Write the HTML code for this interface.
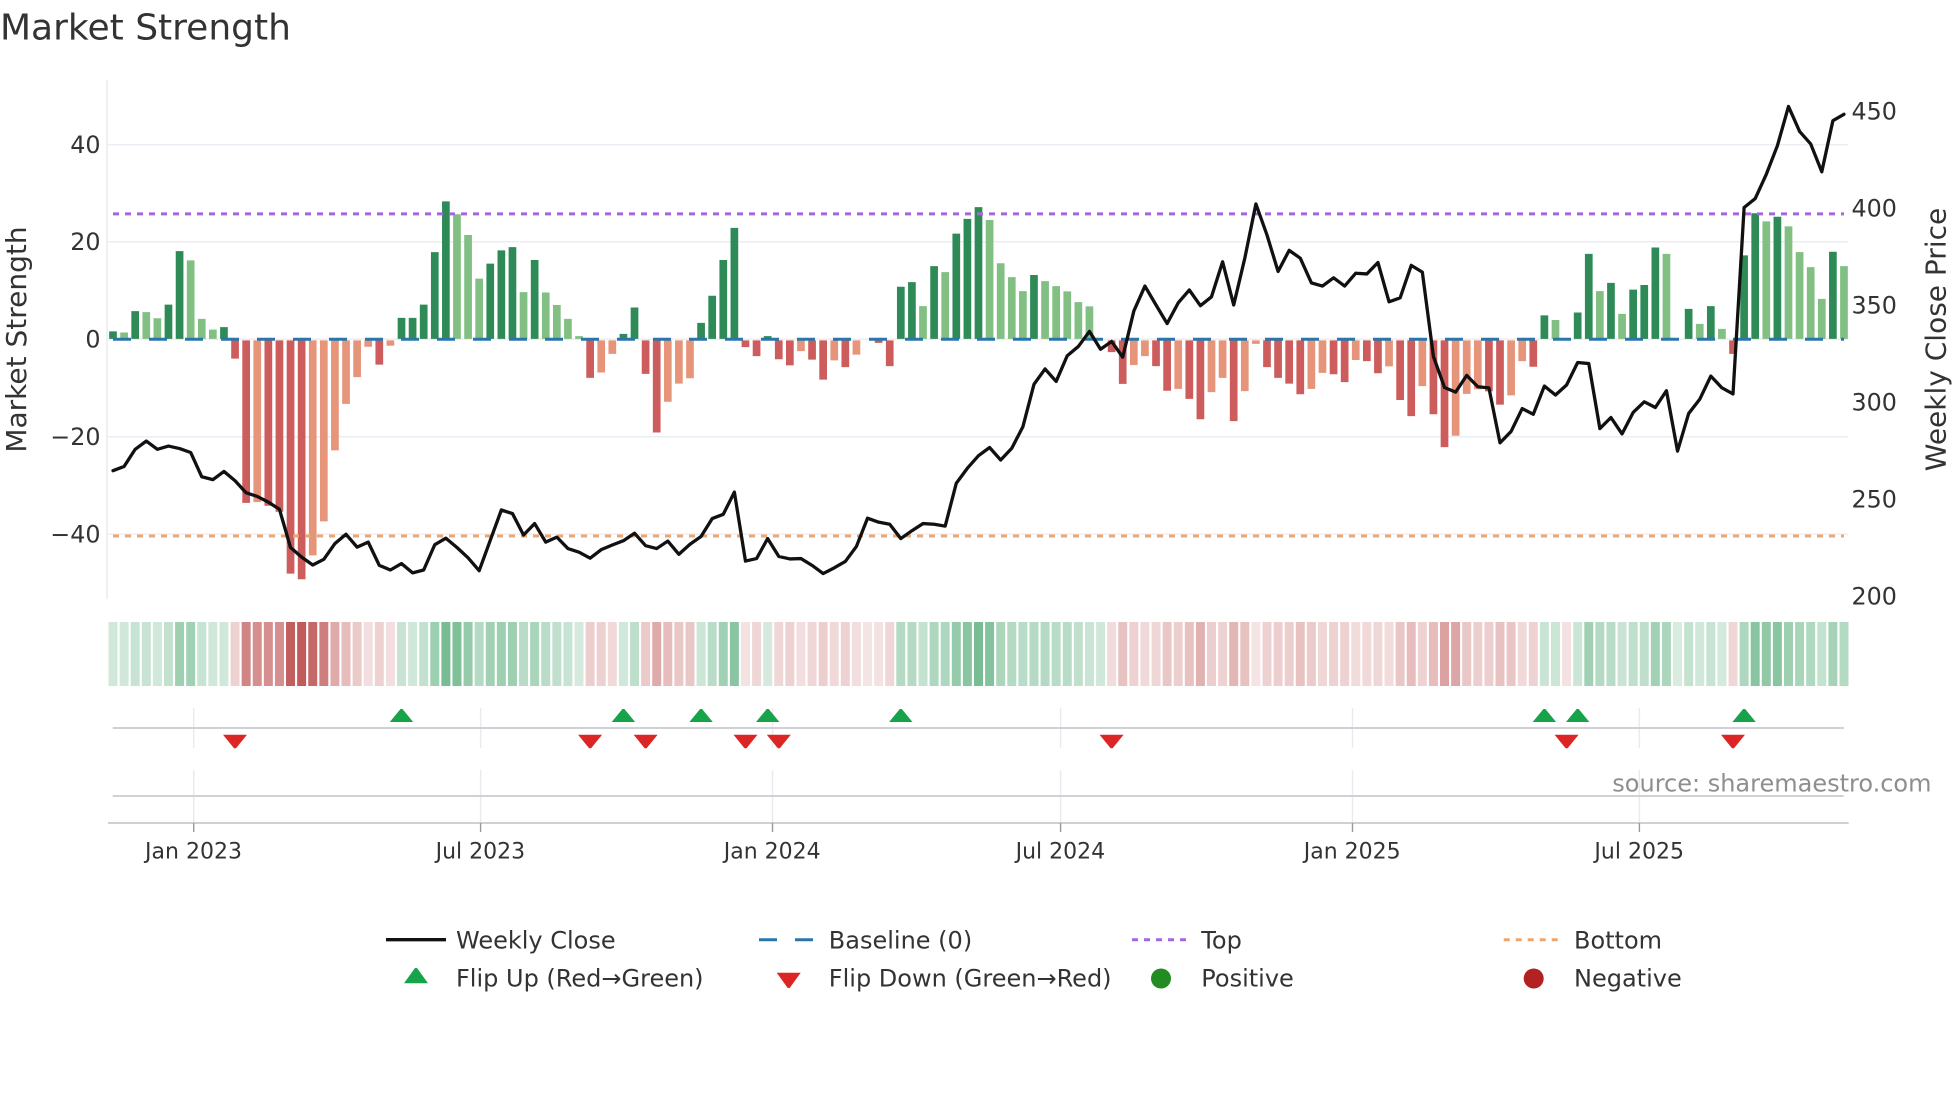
<!DOCTYPE html>
<html lang="en">
<head>
<meta charset="utf-8">
<title>Market Strength</title>
<style>
html,body{margin:0;padding:0;background:#fff;width:1960px;height:1102px;overflow:hidden}
svg{display:block}
text{font-family:"DejaVu Sans","Liberation Sans",sans-serif;fill:#333}
.t{font-size:22px}
.y{font-size:23.8px}
.l{font-size:24px}
.a{font-size:28px}
</style>
</head>
<body>
<svg xmlns="http://www.w3.org/2000/svg" width="1960" height="1102" viewBox="0 0 1960 1102">
<rect width="1960" height="1102" fill="#fff"/>
<text x="0" y="39.5" style="font-size:36px">Market Strength</text>

<!-- grid -->
<path d="M107 80V599" stroke="#e8eaf0" stroke-width="1.4" fill="none"/>
<path d="M107 144.6H1848M107 241.8H1848M107 339.3H1848M107 436.8H1848M107 534.3H1848" stroke="#ebedf5" stroke-width="1.5" fill="none"/>

<!-- bars -->
<g transform="translate(113,60) scale(11.096,.35714)" fill="none" stroke-width=".694">
<path stroke="#2e8b57" d="M0 781V760M2 781V703M5 781V685M6 781V535M10 781V748M26 781V722M27 781V722M28 781V685M29 781V538M30 781V396M34 781V570M35 781V533M36 781V524M38 781V560M46 781V767M47 781V693M53 781V736M54 781V660M55 781V560M56 781V470M59 781V773M71 781V635M72 781V622M74 781V577M76 781V486M77 781V445M78 781V412M83 781V602M129 781V715M132 781V707M133 781V543M135 781V624M137 781V643M138 781V630M139 781V525M142 781V697M144 781V689M147 781V547M148 781V429M150 781V439M155 781V537"/>
<path stroke="#81bf82" d="M1 781V763M3 781V706M4 781V723M7 781V561M8 781V725M9 781V755M31 781V432M32 781V490M33 781V612M37 781V650M39 781V651M40 781V686M41 781V725M42 781V773M73 781V689M75 781V594M79 781V448M80 781V569M81 781V608M82 781V647M84 781V619M85 781V633M86 781V648M87 781V678M88 781V690M130 781V728M134 781V647M136 781V711M140 781V543M143 781V739M145 781V753M149 781V452M151 781V466M152 781V538M153 781V580M154 781V669M156 781V577"/>
<path stroke="#cd5c5c" d="M11 785V836M12 785V1240M14 785V1248M15 785V1265M16 785V1438M17 785V1454M24 785V853M43 785V890M48 785V879M49 785V1043M57 785V804M58 785V829M60 785V838M61 785V855M63 785V839M64 785V895M66 785V860M69 785V792M70 785V857M90 785V818M91 785V907M94 785V857M95 785V926M97 785V949M98 785V1006M101 785V1011M104 785V860M105 785V890M106 785V906M107 785V936M110 785V880M111 785V902M113 785V843M114 785V877M116 785V952M117 785V997M119 785V992M120 785V1084M124 785V928M125 785V965M128 785V859M146 785V823"/>
<path stroke="#e6957a" d="M13 785V1238M18 785V1387M19 785V1292M20 785V1093M21 785V963M22 785V888M23 785V803M25 785V800M44 785V875M45 785V823M50 785V957M51 785V906M52 785V891M62 785V815M65 785V841M67 785V825M92 785V854M93 785V829M96 785V921M99 785V930M100 785V890M102 785V927M103 785V795M108 785V921M109 785V876M112 785V840M115 785V858M118 785V913M121 785V1052M122 785V935M123 785V922M126 785V939M127 785V843"/>
</g>

<!-- reference lines -->
<path d="M113 339.3H1844" stroke="#2a76ab" stroke-width="3" stroke-dasharray="18 18" fill="none"/>
<path d="M113 213.9H1844" stroke="#a468dc" stroke-width="3" stroke-dasharray="6 6" fill="none"/>
<path d="M113 536H1844" stroke="#eda56c" stroke-width="3" stroke-dasharray="6 6" fill="none"/>

<!-- price line -->
<g transform="translate(113,60) scale(11.096,.35714)">
<polyline fill="none" stroke="#111" stroke-width="3.3" stroke-linejoin="round" stroke-linecap="round" vector-effect="non-scaling-stroke" points="0,1150 1,1138 2,1090 3,1067 4,1090 5,1081 6,1088 7,1099 8,1167 9,1175 10,1152 11,1178 12,1212 13,1222 14,1238 15,1258 16,1365 17,1392 18,1414 19,1398 20,1354 21,1328 22,1364 23,1350 24,1415 25,1428 26,1410 27,1436 28,1428 29,1357 30,1339 31,1365 32,1394 33,1430 34,1345 35,1260 36,1270 37,1330 38,1298 39,1350 40,1336 41,1368 42,1378 43,1395 44,1371 45,1358 46,1346 47,1325 48,1360 49,1368 50,1347 51,1384 52,1356 53,1334 54,1284 55,1272 56,1210 57,1403 58,1396 59,1340 60,1390 61,1397 62,1396 63,1415 64,1438 65,1422 66,1404 67,1362 68,1283 69,1294 70,1300 71,1340 72,1318 73,1298 74,1300 75,1305 76,1185 77,1143 78,1108 79,1085 80,1120 81,1087 82,1027 83,908 84,865 85,900 86,828 87,802 88,760 89,810 90,788 91,832 92,703 93,633 94,686 95,738 96,680 97,644 98,688 99,663 100,565 101,686 102,555 103,403 104,490 105,592 106,533 107,555 108,624 109,633 110,610 111,633 112,597 113,599 114,567 115,677 116,666 117,575 118,594 119,830 120,917 121,930 122,883 123,915 124,918 125,1072 126,1040 127,976 128,992 129,913 130,938 131,910 132,847 133,850 134,1032 135,1001 136,1047 137,987 138,957 139,973 140,926 141,1095 142,990 143,950 144,885 145,918 146,935 147,413 148,388 149,320 150,240 151,130 152,200 153,235 154,313 155,170 156,152"/>
</g>

<!-- left ticks -->
<text class="y" x="100.5" y="153" text-anchor="end">40</text>
<text class="y" x="100.5" y="250.2" text-anchor="end">20</text>
<text class="y" x="100.5" y="347.7" text-anchor="end">0</text>
<text class="y" x="100.5" y="445.2" text-anchor="end">−20</text>
<text class="y" x="100.5" y="542.7" text-anchor="end">−40</text>
<!-- right ticks -->
<text class="y" x="1851.5" y="119.5">450</text>
<text class="y" x="1851.5" y="216.6">400</text>
<text class="y" x="1851.5" y="313.4">350</text>
<text class="y" x="1851.5" y="410.6">300</text>
<text class="y" x="1851.5" y="507.7">250</text>
<text class="y" x="1851.5" y="604.5">200</text>
<!-- axis titles -->
<text class="a" text-anchor="middle" transform="translate(26,339.5) rotate(-90)">Market Strength</text>
<text class="a" text-anchor="middle" transform="translate(1945.5,339.5) rotate(-90)">Weekly Close Price</text>

<!-- heat strip -->
<g transform="translate(113,622) scale(11.096,64)" fill="none" stroke-width=".811">
<g stroke="#158c45">
<path stroke-opacity=".2" d="M0 0V1"/><path stroke-opacity=".2" d="M1 0V1"/><path stroke-opacity=".24" d="M2 0V1"/><path stroke-opacity=".24" d="M3 0V1"/><path stroke-opacity=".2" d="M4 0V1"/><path stroke-opacity=".26" d="M5 0V1"/><path stroke-opacity=".42" d="M6 0V1"/><path stroke-opacity=".4" d="M7 0V1"/><path stroke-opacity=".24" d="M8 0V1"/><path stroke-opacity=".2" d="M9 0V1"/><path stroke-opacity=".2" d="M10 0V1"/>
<path stroke-opacity=".24" d="M26 0V1"/><path stroke-opacity=".2" d="M27 0V1"/><path stroke-opacity=".26" d="M28 0V1"/><path stroke-opacity=".42" d="M29 0V1"/><path stroke-opacity=".58" d="M30 0V1"/><path stroke-opacity=".55" d="M31 0V1"/><path stroke-opacity=".45" d="M32 0V1"/><path stroke-opacity=".32" d="M33 0V1"/><path stroke-opacity=".4" d="M34 0V1"/><path stroke-opacity=".42" d="M35 0V1"/><path stroke-opacity=".42" d="M36 0V1"/><path stroke-opacity=".3" d="M37 0V1"/><path stroke-opacity=".37" d="M38 0V1"/><path stroke-opacity=".3" d="M39 0V1"/><path stroke-opacity=".27" d="M40 0V1"/><path stroke-opacity=".24" d="M41 0V1"/><path stroke-opacity=".18" d="M42 0V1"/>
<path stroke-opacity=".2" d="M46 0V1"/><path stroke-opacity=".28" d="M47 0V1"/>
<path stroke-opacity=".22" d="M53 0V1"/><path stroke-opacity=".3" d="M54 0V1"/><path stroke-opacity=".4" d="M55 0V1"/><path stroke-opacity=".5" d="M56 0V1"/>
<path stroke-opacity=".18" d="M59 0V1"/>
<path stroke-opacity=".32" d="M71 0V1"/><path stroke-opacity=".32" d="M72 0V1"/><path stroke-opacity=".25" d="M73 0V1"/><path stroke-opacity=".35" d="M74 0V1"/><path stroke-opacity=".35" d="M75 0V1"/><path stroke-opacity=".45" d="M76 0V1"/><path stroke-opacity=".5" d="M77 0V1"/><path stroke-opacity=".58" d="M78 0V1"/><path stroke-opacity=".52" d="M79 0V1"/><path stroke-opacity=".36" d="M80 0V1"/><path stroke-opacity=".32" d="M81 0V1"/><path stroke-opacity=".3" d="M82 0V1"/><path stroke-opacity=".32" d="M83 0V1"/><path stroke-opacity=".32" d="M84 0V1"/><path stroke-opacity=".3" d="M85 0V1"/><path stroke-opacity=".3" d="M86 0V1"/><path stroke-opacity=".27" d="M87 0V1"/><path stroke-opacity=".23" d="M88 0V1"/><path stroke-opacity=".2" d="M89 0V1"/>
<path stroke-opacity=".23" d="M129 0V1"/><path stroke-opacity=".22" d="M130 0V1"/>
<path stroke-opacity=".22" d="M132 0V1"/><path stroke-opacity=".4" d="M133 0V1"/><path stroke-opacity=".32" d="M134 0V1"/><path stroke-opacity=".3" d="M135 0V1"/><path stroke-opacity=".23" d="M136 0V1"/><path stroke-opacity=".28" d="M137 0V1"/><path stroke-opacity=".28" d="M138 0V1"/><path stroke-opacity=".4" d="M139 0V1"/><path stroke-opacity=".36" d="M140 0V1"/><path stroke-opacity=".17" d="M141 0V1"/><path stroke-opacity=".25" d="M142 0V1"/><path stroke-opacity=".2" d="M143 0V1"/><path stroke-opacity=".24" d="M144 0V1"/><path stroke-opacity=".19" d="M145 0V1"/>
<path stroke-opacity=".35" d="M147 0V1"/><path stroke-opacity=".5" d="M148 0V1"/><path stroke-opacity=".47" d="M149 0V1"/><path stroke-opacity=".5" d="M150 0V1"/><path stroke-opacity=".42" d="M151 0V1"/><path stroke-opacity=".37" d="M152 0V1"/><path stroke-opacity=".34" d="M153 0V1"/><path stroke-opacity=".25" d="M154 0V1"/><path stroke-opacity=".38" d="M155 0V1"/><path stroke-opacity=".32" d="M156 0V1"/>
</g>
<g stroke="#ab2020">
<path stroke-opacity=".2" d="M11 0V1"/><path stroke-opacity=".55" d="M12 0V1"/><path stroke-opacity=".5" d="M13 0V1"/><path stroke-opacity=".5" d="M14 0V1"/><path stroke-opacity=".5" d="M15 0V1"/><path stroke-opacity=".72" d="M16 0V1"/><path stroke-opacity=".74" d="M17 0V1"/><path stroke-opacity=".68" d="M18 0V1"/><path stroke-opacity=".58" d="M19 0V1"/><path stroke-opacity=".38" d="M20 0V1"/><path stroke-opacity=".3" d="M21 0V1"/><path stroke-opacity=".24" d="M22 0V1"/><path stroke-opacity=".15" d="M23 0V1"/><path stroke-opacity=".2" d="M24 0V1"/><path stroke-opacity=".15" d="M25 0V1"/>
<path stroke-opacity=".22" d="M43 0V1"/><path stroke-opacity=".21" d="M44 0V1"/><path stroke-opacity=".17" d="M45 0V1"/>
<path stroke-opacity=".24" d="M48 0V1"/><path stroke-opacity=".38" d="M49 0V1"/><path stroke-opacity=".3" d="M50 0V1"/><path stroke-opacity=".25" d="M51 0V1"/><path stroke-opacity=".25" d="M52 0V1"/>
<path stroke-opacity=".13" d="M57 0V1"/><path stroke-opacity=".18" d="M58 0V1"/>
<path stroke-opacity=".18" d="M60 0V1"/><path stroke-opacity=".2" d="M61 0V1"/><path stroke-opacity=".15" d="M62 0V1"/><path stroke-opacity=".18" d="M63 0V1"/><path stroke-opacity=".22" d="M64 0V1"/><path stroke-opacity=".17" d="M65 0V1"/><path stroke-opacity=".2" d="M66 0V1"/><path stroke-opacity=".15" d="M67 0V1"/><path stroke-opacity=".12" d="M68 0V1"/><path stroke-opacity=".13" d="M69 0V1"/><path stroke-opacity=".18" d="M70 0V1"/>
<path stroke-opacity=".16" d="M90 0V1"/><path stroke-opacity=".28" d="M91 0V1"/><path stroke-opacity=".2" d="M92 0V1"/><path stroke-opacity=".17" d="M93 0V1"/><path stroke-opacity=".18" d="M94 0V1"/><path stroke-opacity=".25" d="M95 0V1"/><path stroke-opacity=".22" d="M96 0V1"/><path stroke-opacity=".28" d="M97 0V1"/><path stroke-opacity=".35" d="M98 0V1"/><path stroke-opacity=".22" d="M99 0V1"/><path stroke-opacity=".2" d="M100 0V1"/><path stroke-opacity=".33" d="M101 0V1"/><path stroke-opacity=".28" d="M102 0V1"/><path stroke-opacity=".12" d="M103 0V1"/><path stroke-opacity=".2" d="M104 0V1"/><path stroke-opacity=".22" d="M105 0V1"/><path stroke-opacity=".22" d="M106 0V1"/><path stroke-opacity=".28" d="M107 0V1"/><path stroke-opacity=".24" d="M108 0V1"/><path stroke-opacity=".18" d="M109 0V1"/><path stroke-opacity=".2" d="M110 0V1"/><path stroke-opacity=".2" d="M111 0V1"/><path stroke-opacity=".16" d="M112 0V1"/><path stroke-opacity=".17" d="M113 0V1"/><path stroke-opacity=".18" d="M114 0V1"/><path stroke-opacity=".16" d="M115 0V1"/><path stroke-opacity=".25" d="M116 0V1"/><path stroke-opacity=".3" d="M117 0V1"/><path stroke-opacity=".2" d="M118 0V1"/><path stroke-opacity=".3" d="M119 0V1"/><path stroke-opacity=".42" d="M120 0V1"/><path stroke-opacity=".4" d="M121 0V1"/><path stroke-opacity=".25" d="M122 0V1"/><path stroke-opacity=".22" d="M123 0V1"/><path stroke-opacity=".22" d="M124 0V1"/><path stroke-opacity=".28" d="M125 0V1"/><path stroke-opacity=".26" d="M126 0V1"/><path stroke-opacity=".17" d="M127 0V1"/><path stroke-opacity=".2" d="M128 0V1"/>
<path stroke-opacity=".13" d="M131 0V1"/><path stroke-opacity=".18" d="M146 0V1"/>
</g>
</g>

<!-- flip rows -->
<path d="M193.7 708V747.7M193.7 770V823M480.6 708V747.7M480.6 770V823M772.5 708V747.7M772.5 770V823M1060.6 708V747.7M1060.6 770V823M1352.5 708V747.7M1352.5 770V823M1639.4 708V747.7M1639.4 770V823" stroke="#e8eaf0" stroke-width="1.4" fill="none"/>
<path d="M112.7 728H1843.7M112.7 796H1843.7" stroke="#d0d1d5" stroke-width="1.9" fill="none"/>
<path d="M108 823H1848.7" stroke="#cfd0d3" stroke-width="1.9" fill="none"/>
<path d="M193.7 823V832M480.6 823V832M772.5 823V832M1060.6 823V832M1352.5 823V832M1639.4 823V832" stroke="#9a9a9a" stroke-width="1.4" fill="none"/>

<g fill="#16a34a">
<path d="M401.5 722h-11.7l10.7-13h2l10.7 13z"/>
<path d="M623.4 722h-11.7l10.7-13h2l10.7 13z"/>
<path d="M701.1 722h-11.7l10.7-13h2l10.7 13z"/>
<path d="M767.7 722h-11.7l10.7-13h2l10.7 13z"/>
<path d="M900.8 722h-11.7l10.7-13h2l10.7 13z"/>
<path d="M1544.4 722h-11.7l10.7-13h2l10.7 13z"/>
<path d="M1577.7 722h-11.7l10.7-13h2l10.7 13z"/>
<path d="M1744.1 722h-11.7l10.7-13h2l10.7 13z"/>
<path d="M416 983.3h-12l11-15.3h2l11 15.3z"/>
</g>
<g fill="#dc2626">
<path d="M235 734.7h-12l11 13.6h2l11-13.6z"/>
<path d="M590.1 734.7h-12l11 13.6h2l11-13.6z"/>
<path d="M645.6 734.7h-12l11 13.6h2l11-13.6z"/>
<path d="M745.5 734.7h-12l11 13.6h2l11-13.6z"/>
<path d="M778.8 734.7h-12l11 13.6h2l11-13.6z"/>
<path d="M1111.6 734.7h-12l11 13.6h2l11-13.6z"/>
<path d="M1566.6 734.7h-12l11 13.6h2l11-13.6z"/>
<path d="M1733 734.7h-12l11 13.6h2l11-13.6z"/>
<path d="M788.7 972.7h-12l11 15.3h2l11-15.3z"/>
</g>

<text x="1612.3" y="791.7" style="font-size:24px;fill:#8e8e8e">source: sharemaestro.com</text>

<!-- x ticks -->
<text class="t" x="193.5" y="858.5" text-anchor="middle">Jan 2023</text>
<text class="t" x="480.4" y="858.5" text-anchor="middle">Jul 2023</text>
<text class="t" x="772.2" y="858.5" text-anchor="middle">Jan 2024</text>
<text class="t" x="1060.4" y="858.5" text-anchor="middle">Jul 2024</text>
<text class="t" x="1352.2" y="858.5" text-anchor="middle">Jan 2025</text>
<text class="t" x="1639.2" y="858.5" text-anchor="middle">Jul 2025</text>

<!-- legend -->
<path d="M386 939.7H446" stroke="#111" stroke-width="3.3" fill="none"/>
<path d="M759 939.7H813" stroke="#2a76ab" stroke-width="3" stroke-dasharray="18 18" fill="none"/>
<path d="M1132 939.7H1186" stroke="#a468dc" stroke-width="3" stroke-dasharray="6 6" fill="none"/>
<path d="M1503.7 939.7H1558.7" stroke="#eda56c" stroke-width="3" stroke-dasharray="6 6" fill="none"/>
<circle cx="1161" cy="978.5" r="10" fill="#228b22"/>
<circle cx="1533.7" cy="978.5" r="10" fill="#b22222"/>
<text class="l" x="456" y="948.6">Weekly Close</text>
<text class="l" x="828.8" y="948.6">Baseline (0)</text>
<text class="l" x="1201.3" y="948.6">Top</text>
<text class="l" x="1574" y="948.6">Bottom</text>
<text class="l" x="456" y="986.6">Flip Up (Red→Green)</text>
<text class="l" x="828.8" y="986.6">Flip Down (Green→Red)</text>
<text class="l" x="1201.3" y="986.6">Positive</text>
<text class="l" x="1574" y="986.6">Negative</text>
</svg>
</body>
</html>
